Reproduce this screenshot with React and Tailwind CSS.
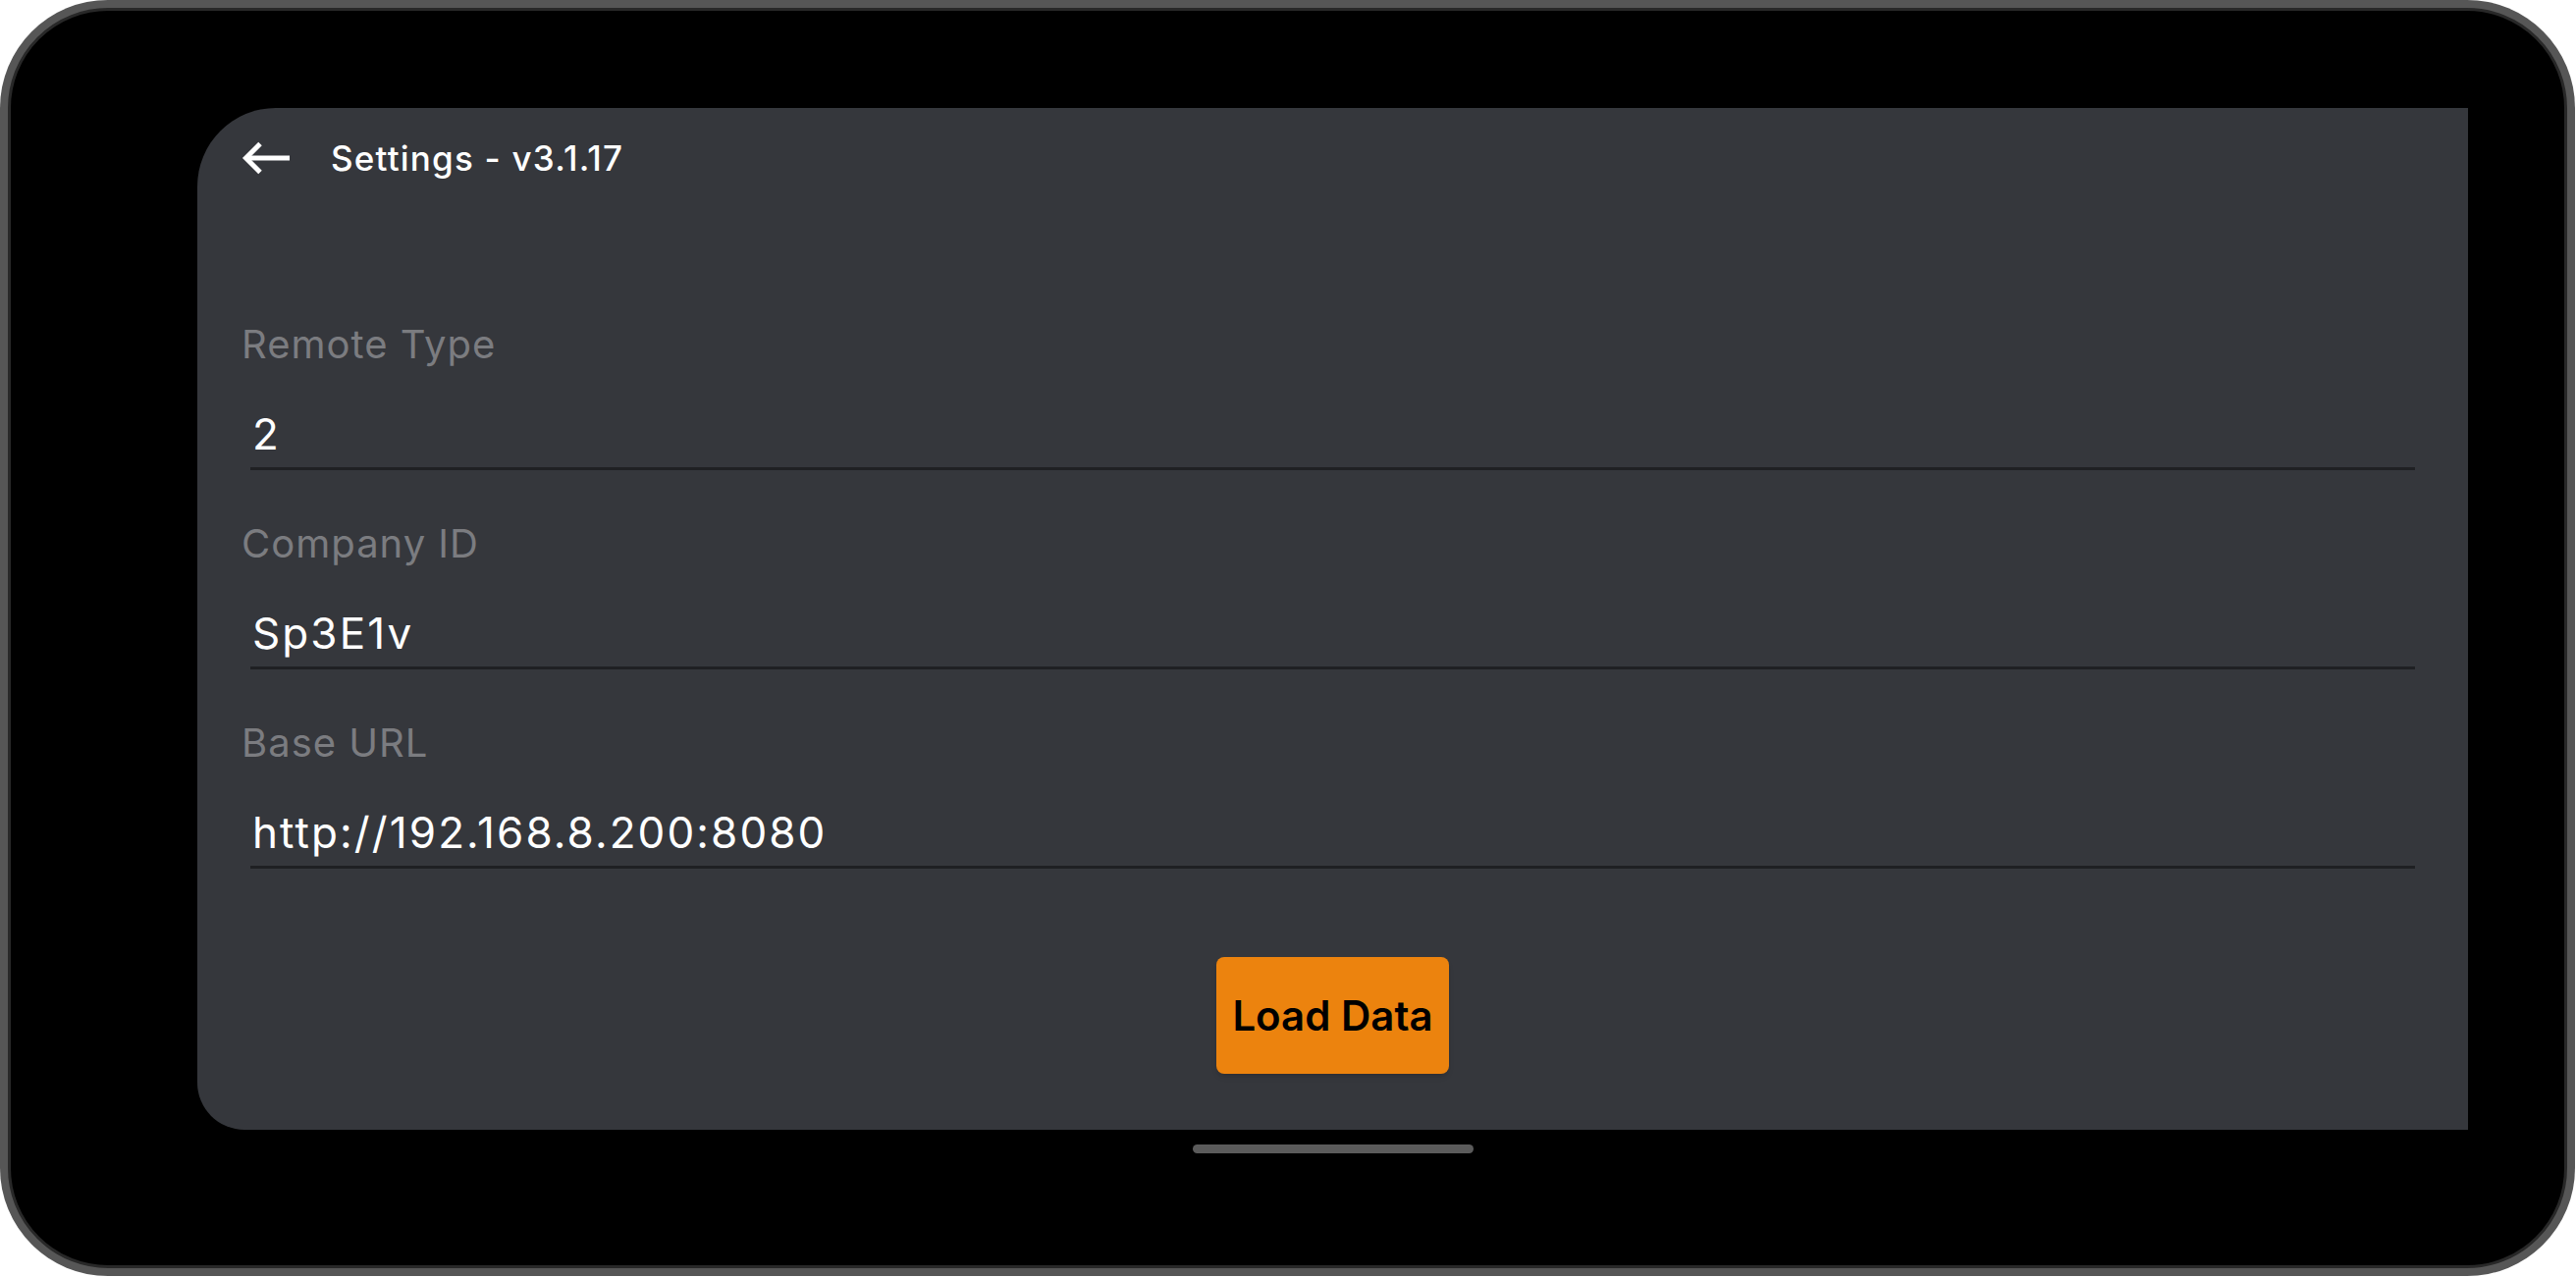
import React from 'react';

const fields = [
  { label: 'Remote Type', value: '2' },
  { label: 'Company ID', value: 'Sp3E1v' },
  { label: 'Base URL', value: 'http://192.168.8.200:8080' },
];

const BackArrow = () => (
  <svg width="52" height="34" viewBox="0 0 52 34" fill="none">
    <path d="M50 17H5" stroke="white" strokeWidth="5" />
    <path d="M20 2.5L5.5 17L20 31.5" stroke="white" strokeWidth="5" />
  </svg>
);

const Field = ({ label, value, first }) => (
  <div className={first ? '' : 'mt-[51px]'}>
    <div className="h-[48px] leading-[48px] pl-[1px] text-[40px] text-[#7b7c80] tracking-[1px]">{label}</div>
    <div className="mt-[42px] h-[50px] leading-[50px] pl-[12px] text-[44px] text-white tracking-[2.1px]">{value}</div>
    <div className="mt-[9px] mx-[10px] h-[3px] bg-[#1f2023]" />
  </div>
);

const App = () => {
  return (
    <div className="w-[2624px] h-[1301px] bg-white" style={{ fontFamily: 'Inter, "Noto Sans", sans-serif' }}>
      <div className="w-[2623px] h-[1300px] rounded-[110px] bg-[#565656] p-[8px]">
        <div className="w-full h-full rounded-[102px] bg-black border-[3px] border-[#282828] pl-[190px] pr-[98px] pt-[99px] flex flex-col">
          <div className="h-[1041px] bg-[#35373c] rounded-tl-[80px] rounded-bl-[48px] flex flex-col">
            <div className="h-[102px] flex items-center pl-[44px]">
              <BackArrow />
              <span className="ml-[40px] text-[35px] font-medium text-white tracking-[1.2px]">Settings - v3.1.17</span>
            </div>

            <div className="pt-[115px] px-[44px]">
              {fields.map((f, i) => (
                <Field key={f.label} label={f.label} value={f.value} first={i === 0} />
              ))}
            </div>

            <div className="mt-[90px] flex justify-center">
              <button className="w-[237px] h-[119px] rounded-[8px] bg-[#ec830e] shadow-md text-black text-[42px] font-semibold">
                Load Data
              </button>
            </div>
          </div>

          <div className="mt-[15px] flex justify-center">
            <div className="w-[286px] h-[9px] rounded-full bg-[#5b5b5b]" />
          </div>
        </div>
      </div>
    </div>
  );
};

export default App;
